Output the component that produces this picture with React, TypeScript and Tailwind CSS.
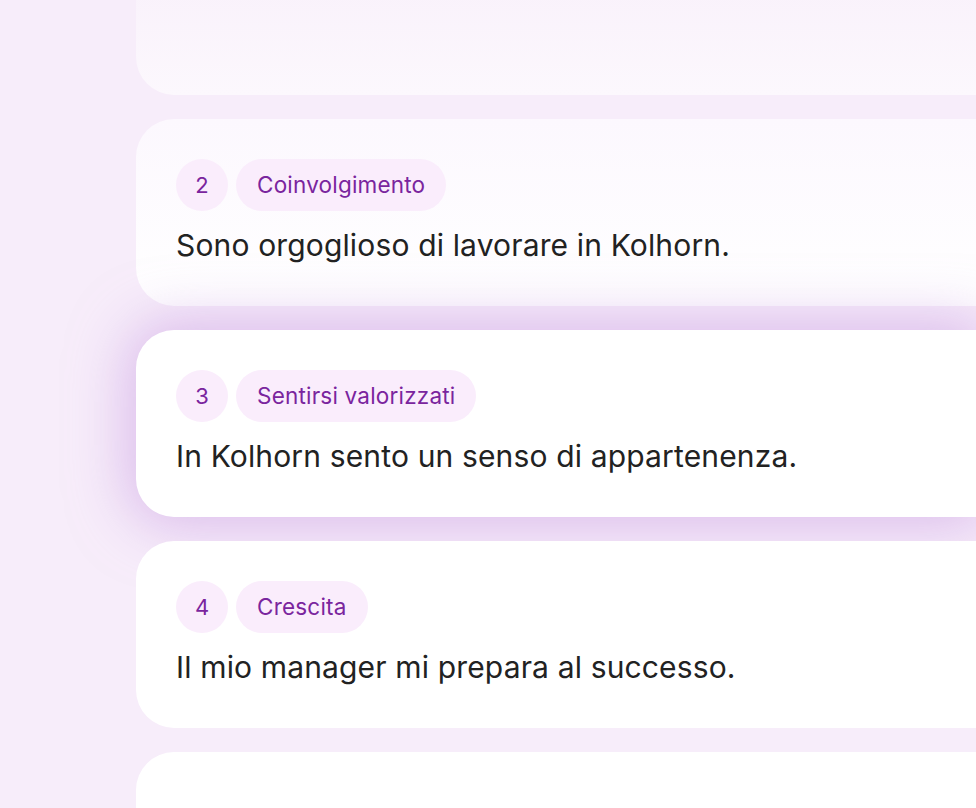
const questions = [
  { n: 1, tag: 'Benessere', text: 'Mi sento bene al lavoro.' },
  { n: 2, tag: 'Coinvolgimento', text: 'Sono orgoglioso di lavorare in Kolhorn.' },
  { n: 3, tag: 'Sentirsi valorizzati', text: 'In Kolhorn sento un senso di appartenenza.' },
  { n: 4, tag: 'Crescita', text: 'Il mio manager mi prepara al successo.' },
  { n: 5, tag: '', text: '' },
];

type Tone = 'faded' | 'soft' | 'active' | 'plain' | 'empty';

function QuestionCard({ n, tag, text, tone }: { n: number; tag: string; text: string; tone: Tone }) {
  const bg =
    tone === 'faded'
      ? 'bg-gradient-to-b from-[#f7edfa] to-[#fcf8fd]'
      : tone === 'soft'
        ? 'bg-gradient-to-b from-[#fcf8fe] to-[#ffffff]'
        : 'bg-white';
  const shadow = tone === 'active' ? 'shadow-[0_0_56px_10px_rgba(196,150,224,0.55)]' : '';
  const hidden = tone === 'faded' || tone === 'empty';
  return (
    <div className={`h-[187px] shrink-0 rounded-l-[38px] pl-10 pt-10 ${bg} ${shadow}`}>
      {!hidden && (
        <>
          <div className="flex items-center gap-2">
            <span className="w-[52px] h-[52px] rounded-full bg-[#faedfc] flex items-center justify-center text-[22px] text-[#7a259e]">
              {n}
            </span>
            <span className="h-[52px] rounded-full bg-[#faedfc] pl-[21px] pr-[21px] flex items-center text-[22.5px] tracking-[0.2px] text-[#7a259e]">
              {tag}
            </span>
          </div>
          <p className="mt-4 text-[30px] leading-[36px] tracking-[0.15px] text-[#222222]">{text}</p>
        </>
      )}
    </div>
  );
}

export default function App() {
  const tones: Tone[] = ['faded', 'soft', 'active', 'plain', 'empty'];
  return (
    <div
      className="w-[976px] h-[808px] overflow-hidden bg-[#f7edfa]"
      style={{ fontFamily: 'Inter, "Noto Sans", sans-serif' }}
    >
      <div className="flex flex-col gap-6 pl-[136px] -mt-[92px]">
        {questions.map((q, i) => (
          <QuestionCard key={q.n} {...q} tone={tones[i]} />
        ))}
      </div>
    </div>
  );
}
